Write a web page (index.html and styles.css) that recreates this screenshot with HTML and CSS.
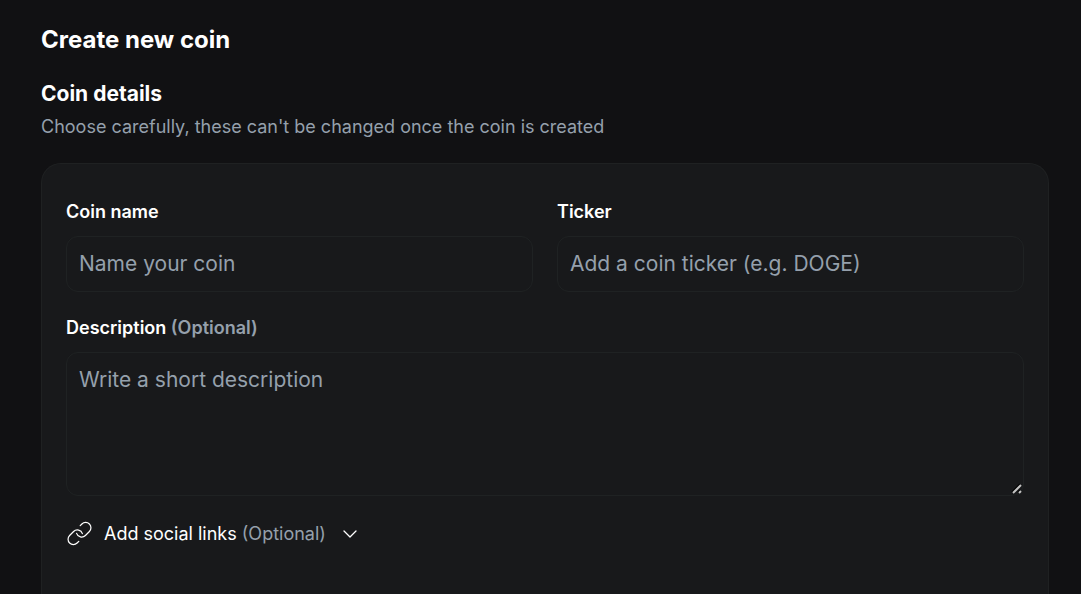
FILE: index.html
```html
<!DOCTYPE html>
<html lang="en">
<head>
<meta charset="utf-8">
<meta name="viewport" content="width=device-width, initial-scale=1">
<title>Create new coin</title>
<link rel="stylesheet" href="styles.css">
</head>
<body>
<main class="page">
  <h1 class="page-title">Create new coin</h1>
  <h2 class="section-title">Coin details</h2>
  <p class="section-note">Choose carefully, these can't be changed once the coin is created</p>
  <form class="card">
    <div class="row">
      <div class="field">
        <label class="label" for="name">Coin name</label>
        <input class="control" id="name" type="text" placeholder="Name your coin">
      </div>
      <div class="field">
        <label class="label" for="ticker">Ticker</label>
        <input class="control" id="ticker" type="text" placeholder="Add a coin ticker (e.g. DOGE)">
      </div>
    </div>
    <div class="field">
      <label class="label" for="description">Description <span class="optional">(Optional)</span></label>
      <div class="area-wrap">
        <textarea class="control control-area" id="description" placeholder="Write a short description"></textarea>
        <svg class="grip" viewBox="0 0 12 12" aria-hidden="true"><path class="grip-shade" d="M1.500 9.500 9.500 1.500M7.500 9.500l2-2"/><path class="grip-line" d="M2 10l8-8M8 10l2-2"/></svg>
      </div>
    </div>
    <button class="social" type="button">
      <svg class="link-icon" viewBox="0 0 27 27" aria-hidden="true"><path d="M14.200 5.700l1.700-1.700a5.300 5.300 0 0 1 7.500 7.500l-4 4a5.300 5.300 0 0 1-8.800-2.100M12.800 21.300l-1.700 1.700a5.300 5.300 0 0 1-7.500-7.500l4-4a5.300 5.300 0 0 1 8.800 2.100"/></svg>
      <span>Add social links <span class="optional">(Optional)</span></span>
      <svg class="chevron" viewBox="0 0 16 16" aria-hidden="true"><path d="M2 5l6 6 6-6"/></svg>
    </button>
  </form>
</main>
</body>
</html>
```
FILE: styles.css
```css
* { box-sizing: border-box; }
body {
  margin: 0;
  background: #111113;
  color: #fff;
  font-family: Inter, "Liberation Sans", sans-serif;
  font-size: 18px;
  line-height: 24px;
}
.page {
  display: flex;
  flex-direction: column;
  min-height: 100vh;
  padding: 24px 32px 0 41px;
}
.page-title {
  margin: 0 0 24px;
  font-size: 24px;
  line-height: 32px;
  font-weight: 700;
}
.section-title {
  margin: 0 0 7px;
  font-size: 21px;
  line-height: 28px;
  font-weight: 700;
}
.section-note { margin: 0 0 24px; color: #95a0ac; }
.card {
  display: flex;
  flex: 1;
  flex-direction: column;
  gap: 24px;
  padding: 36px 24px;
  border: 1px solid #1f2122;
  border-bottom: 0;
  border-radius: 20px 20px 0 0;
  background: #18191b;
}
.row { display: grid; grid-template-columns: 1fr 1fr; gap: 24px; }
.field { display: flex; flex-direction: column; gap: 12px; min-width: 0; }
.label { font-weight: 600; }
.optional { color: #95a0ac; }
.control {
  display: block;
  width: 100%;
  height: 56px;
  padding: 12px 12px 14px;
  border: 1px solid #1f2223;
  border-radius: 12px;
  outline: 0;
  background: #18191b;
  color: #fff;
  font: inherit;
  font-size: 21px;
  line-height: 30px;
}
.control::placeholder { color: #95a0ac; opacity: 1; }
.area-wrap { position: relative; }
.control-area { height: 144px; resize: vertical; }
.control-area::-webkit-resizer { background: transparent; }
.grip {
  position: absolute;
  right: 1px;
  bottom: 1px;
  width: 12px;
  height: 12px;
  fill: none;
  pointer-events: none;
}
.grip-shade { stroke: #000; stroke-width: 3; }
.grip-line { stroke: #c4c4c4; stroke-width: 2; }
.social {
  display: flex;
  align-items: center;
  align-self: flex-start;
  gap: 11px;
  padding: 0;
  border: 0;
  background: none;
  color: #fff;
  font: inherit;
}
.link-icon, .chevron { fill: none; stroke: #fff; stroke-linecap: round; stroke-linejoin: round; }
.link-icon { width: 27px; height: 27px; stroke-width: 1.2; }
.chevron { width: 16px; height: 16px; margin-left: 5px; stroke-width: 1.3; }
```
